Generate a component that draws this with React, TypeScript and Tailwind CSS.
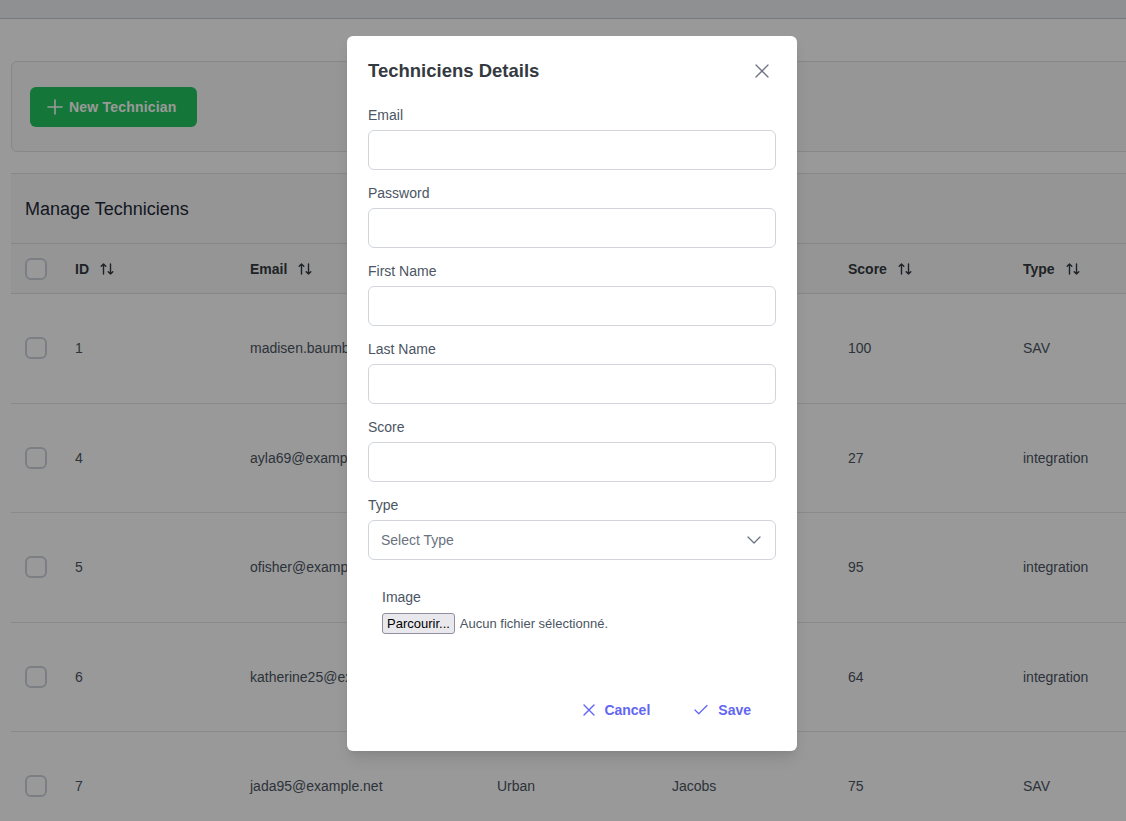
import React from "react";
import { Plus, X, Check, ChevronDown } from "lucide-react";

type Tech = { id: number; email: string; first: string; last: string; score: number; type: string };

const techs: Tech[] = [
  { id: 1, email: "madisen.baumbach@example.org", first: "Madisen", last: "Baumbach", score: 100, type: "SAV" },
  { id: 4, email: "ayla69@example.com", first: "Ayla", last: "Kuhn", score: 27, type: "integration" },
  { id: 5, email: "ofisher@example.org", first: "Oscar", last: "Fisher", score: 95, type: "integration" },
  { id: 6, email: "katherine25@example.net", first: "Katherine", last: "Lowe", score: 64, type: "integration" },
  { id: 7, email: "jada95@example.net", first: "Urban", last: "Jacobs", score: 75, type: "SAV" },
];

const cols = "grid grid-cols-[50px_175px_247px_175px_176px_175px_1fr]";

// up / down arrows used on sortable headers
const SortIcon = () => (
  <svg width="16" height="16" viewBox="0 0 16 16" fill="none" stroke="#343a40" strokeWidth="1.4" strokeLinecap="round" strokeLinejoin="round">
    <path d="M4.5 13V3M2.2 5.3 4.5 3l2.3 2.3" />
    <path d="M11.5 3v10M9.2 10.7l2.3 2.3 2.3-2.3" />
  </svg>
);

const Box = () => <div className="w-[22px] h-[22px] rounded-md border-2 border-[#ced4da] bg-white" />;

const Field = ({ label }: { label: string }) => (
  <div className="mb-[13px]">
    <div className="text-sm leading-5 text-[#4b5563] mb-[5px]">{label}</div>
    <div className="h-10 w-full rounded-md border border-[#d1d5db] bg-white" />
  </div>
);

const Header = ({ label }: { label: string }) => (
  <div className="flex items-center gap-[10px] pl-[14px] text-sm font-bold text-[#343a40]">
    {label}
    <SortIcon />
  </div>
);

export default function App() {
  return (
    <div className="relative h-[821px] overflow-hidden bg-white font-['Liberation_Sans',Arial,sans-serif]">
      <div className="h-[19px] bg-[#eff1f3] border-b border-[#c8ccd1]" />

      <div className="pl-[11px] pt-[42px] w-[1240px]">
        {/* toolbar */}
        <div className="h-[91px] rounded-md border border-[#dee2e6] bg-[#fbfbfc] flex items-center pl-[18px]">
          <button className="h-10 pl-[13px] pr-[20px] rounded-md bg-[#22c55e] text-white text-sm font-bold tracking-[0.2px] flex items-center gap-[2px]">
            <Plus size={24} strokeWidth={1.6} />
            New Technician
          </button>
        </div>

        {/* table */}
        <div className="mt-[21px] border-t border-[#dee2e6]">
          <div className="h-[69px] bg-[#f8f9fa] flex items-center pl-[14px] text-lg text-[#1f2937]">Manage Techniciens</div>
          <div className={`${cols} h-[51px] items-center bg-[#f8f9fa] border-y border-[#dee2e6]`}>
            <div className="pl-[14px]"><Box /></div>
            <Header label="ID" />
            <Header label="Email" />
            <Header label="First Name" />
            <Header label="Last Name" />
            <Header label="Score" />
            <Header label="Type" />
          </div>
          {techs.map((t) => (
            <div key={t.id} className={`${cols} h-[109.5px] items-center border-b border-[#e5e7eb] text-sm text-[#4b5563]`}>
              <div className="pl-[14px]"><Box /></div>
              <div className="pl-[14px]">{t.id}</div>
              <div className="pl-[14px]">{t.email}</div>
              <div className="pl-[14px]">{t.first}</div>
              <div className="pl-[14px]">{t.last}</div>
              <div className="pl-[14px]">{t.score}</div>
              <div className="pl-[14px]">{t.type}</div>
            </div>
          ))}
        </div>
      </div>

      {/* dialog mask */}
      <div className="absolute inset-0 bg-black/40">
        <div className="absolute left-[347px] top-[36px] w-[450px] rounded-md bg-white shadow-lg">
          <div className="flex items-center justify-between pl-[21px] pr-[19px] pt-[19px]">
            <h2 className="text-[18.5px] leading-6 font-bold text-[#343a40]">Techniciens Details</h2>
            <button className="w-8 h-8 flex items-center justify-center text-[#6b7280]">
              <X size={24} strokeWidth={1.3} />
            </button>
          </div>

          <div className="px-[21px] pt-[18px]">
            <Field label="Email" />
            <Field label="Password" />
            <Field label="First Name" />
            <Field label="Last Name" />
            <Field label="Score" />
            <div>
              <div className="text-sm leading-5 text-[#4b5563] mb-[5px]">Type</div>
              <div className="h-10 w-full rounded-md border border-[#d1d5db] bg-white flex items-center justify-between pl-3 pr-[9px]">
                <span className="text-sm text-[#6b7280]">Select Type</span>
                <ChevronDown size={24} strokeWidth={1.3} className="text-[#6b7280]" />
              </div>
            </div>

            <div className="pl-[14px] pt-[27px]">
              <div className="text-sm leading-5 text-[#4b5563]">Image</div>
              <div className="mt-[6px] flex items-center gap-[5px]">
                <span className="h-[21px] px-[4px] flex items-center rounded-[3px] border border-[#8f8f9d] bg-[#e9e9ed] text-[13px] text-black">Parcourir...</span>
                <span className="text-[13px] text-[#4b5563]">Aucun fichier sélectionné.</span>
              </div>
            </div>
          </div>

          <div className="flex justify-end items-center gap-[42px] pr-[46px] pt-[56px] pb-[21px]">
            <button className="h-10 flex items-center gap-[5px] text-sm font-bold text-[#6366f1]">
              <X size={20} strokeWidth={1.6} />
              Cancel
            </button>
            <button className="h-10 flex items-center gap-[8px] text-sm font-bold text-[#6366f1]">
              <Check size={18} strokeWidth={1.7} />
              Save
            </button>
          </div>
        </div>
      </div>
    </div>
  );
}
